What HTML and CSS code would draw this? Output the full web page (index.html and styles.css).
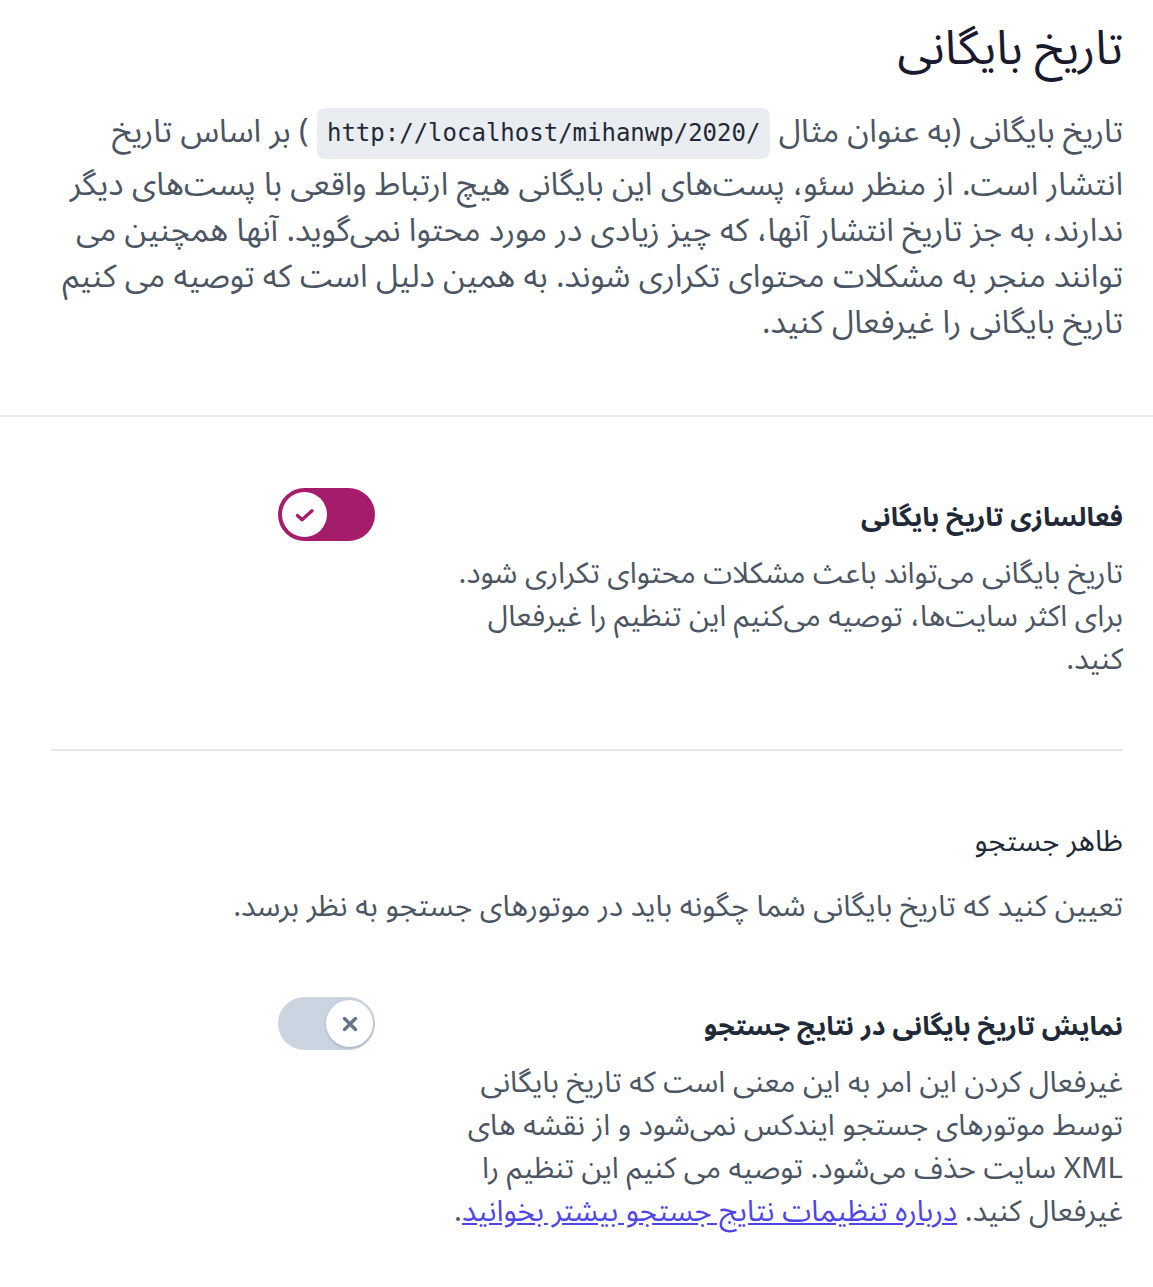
FILE: index.html
```html
<!DOCTYPE html>
<html lang="fa" dir="rtl">
<head>
<meta charset="utf-8">
<title>تاریخ بایگانی</title>
<link rel="stylesheet" href="styles.css">
</head>
<body>
<header class="intro">
  <h1 class="title">تاریخ بایگانی</h1>
  <p class="lead">تاریخ بایگانی (به عنوان مثال <code class="code">http://localhost/mihanwp/2020/</code> ) بر اساس تاریخ انتشار است. از منظر سئو، پست‌های این بایگانی هیچ ارتباط واقعی با پست‌های دیگر ندارند، به جز تاریخ انتشار آنها، که چیز زیادی در مورد محتوا نمی‌گوید. آنها همچنین می توانند منجر به مشکلات محتوای تکراری شوند. به همین دلیل است که توصیه می کنیم تاریخ بایگانی را غیرفعال کنید.</p>
</header>
<hr class="rule-full">
<main class="content">
  <section class="setting">
    <div class="setting-text">
      <h2 class="setting-label">فعالسازی تاریخ بایگانی</h2>
      <p class="setting-desc">تاریخ بایگانی می‌تواند باعث مشکلات محتوای تکراری شود. برای اکثر سایت‌ها، توصیه می‌کنیم این تنظیم را غیرفعال کنید.</p>
    </div>
    <div class="toggle toggle-on">
      <span class="knob">
        <svg width="24" height="24" viewBox="0 0 24 24"><path d="M4.5 12.5l4.5 4.2L19 7.8" fill="none" stroke="#a51d6a" stroke-width="3.4" stroke-linecap="round" stroke-linejoin="round"/></svg>
      </span>
    </div>
  </section>
  <hr class="rule">
  <section class="group">
    <h3 class="group-title">ظاهر جستجو</h3>
    <p class="group-desc">تعیین کنید که تاریخ بایگانی شما چگونه باید در موتورهای جستجو به نظر برسد.</p>
  </section>
  <section class="setting setting-second">
    <div class="setting-text">
      <h2 class="setting-label">نمایش تاریخ بایگانی در نتایج جستجو</h2>
      <p class="setting-desc">غیرفعال کردن این امر به این معنی است که تاریخ بایگانی توسط موتورهای جستجو ایندکس نمی‌شود و از نقشه های XML سایت حذف می‌شود. توصیه می کنیم این تنظیم را غیرفعال کنید. <a class="link" href="#">درباره تنظیمات نتایج جستجو بیشتر بخوانید</a>.</p>
    </div>
    <div class="toggle toggle-off">
      <span class="knob">
        <svg width="22" height="22" viewBox="0 0 22 22"><path d="M5.5 5.5l11 11M16.5 5.5l-11 11" fill="none" stroke="#64748b" stroke-width="3.4" stroke-linecap="round"/></svg>
      </span>
    </div>
  </section>
</main>
</body>
</html>
```

FILE: styles.css
```css
* { box-sizing: border-box; }
html, body { margin: 0; padding: 0; background: #fff; }
body {
  font-family: "Noto Sans Arabic", "Noto Sans", sans-serif;
  color: #4b5563;
  direction: rtl;
}
.intro { padding: 14px 30px 69px 30px; }
.title {
  margin: 0;
  font-size: 47px;
  font-weight: normal;
  color: #1a1a2e;
  line-height: 70px;
}
.lead {
  margin: 21px 0 0 0;
  font-size: 32px;
  line-height: 46px;
  color: #4b5563;
}
.code {
  display: inline-block;
  vertical-align: middle;
  font-family: "DejaVu Sans Mono", monospace;
  font-size: 24px;
  line-height: 35px;
  background: #e9ecf0;
  color: #1f2937;
  border-radius: 8px;
  padding: 8px 10px;
  direction: ltr;
  margin: 3px 0;
}
.rule-full {
  margin: 0;
  border: 0;
  border-top: 2px solid #e8e8e8;
}
.content { padding: 0 30px 40px 30px; }
.setting {
  display: flex;
  align-items: flex-start;
  gap: 68px;
  padding-top: 78px;
  padding-bottom: 67px;
}
.setting-text { width: 680px; }
.setting-label {
  margin: 0;
  font-size: 26.6px;
  font-weight: bold;
  color: #1f2937;
  line-height: 46px;
}
.setting-desc {
  margin: 12px 0 0 0;
  font-size: 29.4px;
  line-height: 43px;
  color: #4b5563;
}
.toggle {
  width: 97px;
  height: 53px;
  border-radius: 27px;
  display: flex;
  align-items: center;
  padding: 0 4px;
  flex-shrink: 0;
  margin-top: -7px;
}
.toggle-on { background: #a51d6a; justify-content: flex-end; }
.toggle-off { background: #cbd5e1; justify-content: flex-start; padding: 0 2px; }
.knob {
  width: 45px;
  height: 45px;
  border-radius: 50%;
  background: #fff;
  display: flex;
  align-items: center;
  justify-content: center;
}
.toggle-off .knob { width: 47px; height: 47px; box-shadow: 0 1px 3px rgba(0,0,0,0.22); }
.rule {
  margin: 0;
  margin-left: 21px;
  border: 0;
  border-top: 2px solid #e8e8e8;
}
.group { padding-top: 68px; }
.group-title {
  margin: 0;
  font-size: 29px;
  font-weight: normal;
  color: #1f2937;
  line-height: 46px;
}
.group-desc {
  margin: 20px 0 0 0;
  font-size: 29.7px;
  line-height: 43px;
}
.setting-second { padding-top: 76px; }
.link { color: #4f46e5; text-decoration: underline; }
```
